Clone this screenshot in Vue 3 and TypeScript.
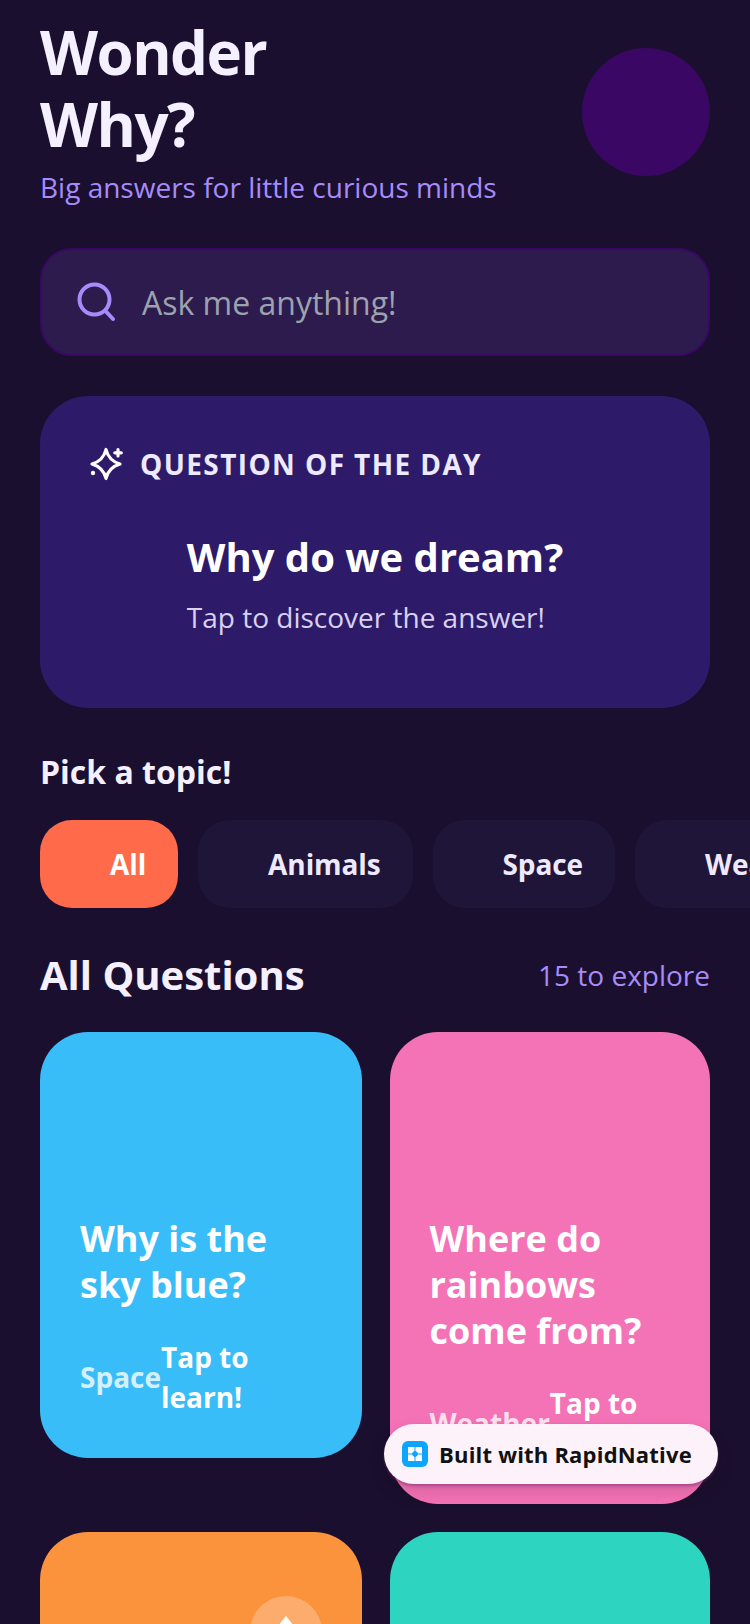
<script setup lang="ts">
interface Topic {
  label: string
  active?: boolean
}

interface Question {
  title: string
  topic: string
  color: string
  badge?: boolean
}

const topics: Topic[] = [
  { label: 'All', active: true },
  { label: 'Animals' },
  { label: 'Space' },
  { label: 'Weather' },
]

const questions: Question[] = [
  { title: 'Why is the sky blue?', topic: 'Space', color: '#38bdf8' },
  { title: 'Where do rainbows come from?', topic: 'Weather', color: '#f472b6' },
  { title: 'Why do volcanoes erupt?', topic: 'Earth', color: '#fb923c', badge: true },
  { title: 'How do fish breathe?', topic: 'Animals', color: '#2dd4bf' },
]
</script>

<template>
  <div class="screen">
    <header class="header">
      <div class="header__text">
        <h1 class="title">Wonder<br />Why?</h1>
        <p class="subtitle">Big answers for little curious minds</p>
      </div>
      <div class="avatar"></div>
    </header>

    <div class="search">
      <svg class="search__icon" viewBox="0 0 40 40" fill="none" stroke="#a78bfa" stroke-width="4" stroke-linecap="round" aria-hidden="true">
        <circle cx="18.500" cy="17.500" r="15" />
        <path d="M29.500 29l7.500 8" />
      </svg>
      <span class="search__placeholder">Ask me anything!</span>
    </div>

    <section class="daily">
      <div class="daily__label">
        <svg class="daily__icon" viewBox="0 0 36 36" fill="none" stroke="#fff" stroke-width="3.200" stroke-linejoin="round" stroke-linecap="round" aria-hidden="true">
          <path d="M18 3.500c1.800 7.500 5.500 12 14 14.500-8.500 2.500-12.200 7-14 14.500-1.800-7.500-5.500-12-14-14.500 8.500-2.500 12.200-7 14-14.500z" />
          <path d="M30 3.500v6.500M26.800 6.800h6.500" />
          <circle cx="5" cy="27" r="2.200" fill="#fff" stroke="none" />
        </svg>
        <span>QUESTION OF THE DAY</span>
      </div>
      <div class="daily__body">
        <h2 class="daily__question">Why do we dream?</h2>
        <p class="daily__hint">Tap to discover the answer!</p>
      </div>
    </section>

    <h3 class="pick">Pick a topic!</h3>
    <div class="chips">
      <div v-for="t in topics" :key="t.label" class="chip" :class="{ 'chip--active': t.active }">
        <span class="chip__emoji"></span>
        <span>{{ t.label }}</span>
      </div>
    </div>

    <div class="list-head">
      <h3 class="list-head__title">All Questions</h3>
      <span class="list-head__count">15 to explore</span>
    </div>

    <div class="grid">
      <article v-for="q in questions" :key="q.title" class="card" :style="{ backgroundColor: q.color }">
        <div v-if="q.badge" class="card__badge">
          <svg viewBox="0 0 40 40" width="40" height="40" aria-hidden="true"><path d="M20 4l16 20H4z" fill="#fff" /></svg>
        </div>
        <h4 class="card__title">{{ q.title }}</h4>
        <div class="card__foot">
          <span class="card__topic">{{ q.topic }}</span>
          <span class="card__tap">Tap to learn!</span>
        </div>
      </article>
    </div>

    <div class="built">
      <svg class="built__logo" viewBox="0 0 26 26" aria-hidden="true">
        <rect width="26" height="26" rx="6" fill="#0ea5ff" />
        <path d="M6 6h6.500v4l-1.500 1-1 1.500H6zM13.500 6H20v6.500h-4l-1-1.500-1.500-1zM6 13.500h4l1 1.500 1.500 1v4H6zM16 13.500h4V20h-6.500v-4l1.500-1z" fill="#fff" />
      </svg>
      <span>Built with RapidNative</span>
    </div>
  </div>
</template>

<style>
html,
body {
  margin: 0;
  background: #1a0f2e;
}
</style>

<style scoped>
.screen {
  position: relative;
  height: 1624px;
  overflow: hidden;
  box-sizing: border-box;
  padding: 16px 40px 0;
  background: #1a0f2e;
  font-family: "Open Sans", "Noto Sans", sans-serif;
  color: #fff;
}

.header {
  display: flex;
  justify-content: space-between;
  align-items: center;
}

.title {
  margin: 0;
  font-size: 60px;
  line-height: 72px;
  font-weight: 700;
  letter-spacing: -1.500px;
  color: #f5f0ff;
}

.subtitle {
  margin: 7px 0 0;
  font-size: 28px;
  line-height: 40px;
  color: #a78bfa;
}

.avatar {
  width: 128px;
  height: 128px;
  border-radius: 50%;
  background: #3b0764;
}

.search {
  display: flex;
  align-items: center;
  gap: 26px;
  height: 108px;
  box-sizing: border-box;
  margin-top: 41px;
  padding: 0 34px;
  border: 2px solid #3b0764;
  border-radius: 32px;
  background: #2d1b4e;
}

.search__icon {
  width: 40px;
  height: 40px;
  flex: none;
}

.search__placeholder {
  font-size: 32px;
  color: #9ca3af;
}

.daily {
  margin-top: 40px;
  height: 312px;
  box-sizing: border-box;
  padding: 50px 48px 0;
  border-radius: 48px;
  background: #2d1b69;
}

.daily__label {
  display: flex;
  align-items: center;
  gap: 16px;
  font-size: 28px;
  line-height: 36px;
  font-weight: 700;
  letter-spacing: 1.400px;
  color: #ede9fe;
}

.daily__icon {
  width: 36px;
  height: 36px;
  flex: none;
}

.daily__body {
  display: flex;
  flex-direction: column;
  align-items: flex-start;
  width: fit-content;
  margin: 47px auto 0;
}

.daily__question {
  margin: 0;
  font-size: 40px;
  line-height: 56px;
  font-weight: 700;
}

.daily__hint {
  margin: 12px 0 0;
  font-size: 28px;
  line-height: 40px;
  color: #d8d2f0;
}

.pick {
  margin: 42px 0 0;
  font-size: 32px;
  line-height: 44px;
  font-weight: 700;
  color: #f5f0ff;
}

.chips {
  display: flex;
  gap: 20px;
  margin-top: 26px;
}

.chip {
  display: flex;
  align-items: center;
  flex: none;
  height: 88px;
  padding: 0 32px;
  border-radius: 32px;
  background: #1f1539;
  font-size: 28px;
  font-weight: 700;
  letter-spacing: -0.100px;
  color: #ede9fe;
}

.chip--active {
  background: #ff6b4a;
  color: #fff;
}

.chip__emoji {
  width: 38px;
}

.list-head {
  display: flex;
  justify-content: space-between;
  align-items: center;
  margin-top: 39px;
}

.list-head__title {
  margin: 0;
  font-size: 40px;
  line-height: 56px;
  font-weight: 700;
  color: #f5f0ff;
}

.list-head__count {
  font-size: 28px;
  color: #a78bfa;
}

.grid {
  display: grid;
  grid-template-columns: 322px 320.500px;
  column-gap: 27.500px;
  row-gap: 28px;
  align-items: start;
  margin-top: 29px;
}

.card {
  position: relative;
  box-sizing: border-box;
  padding: 184px 40px 41px;
  border-radius: 48px;
}

.card__badge {
  position: absolute;
  top: 64px;
  right: 40px;
  display: flex;
  align-items: center;
  justify-content: center;
  width: 72px;
  height: 72px;
  border-radius: 50%;
  background: rgba(255, 255, 255, 0.25);
}

.card__title {
  margin: 0;
  font-size: 36px;
  line-height: 46px;
  font-weight: 700;
}

.card__foot {
  display: flex;
  align-items: center;
  margin-top: 29px;
}

.card__topic {
  font-size: 28px;
  font-weight: 700;
  color: rgba(255, 255, 255, 0.8);
}

.card__tap {
  font-size: 28px;
  line-height: 40px;
  font-weight: 700;
}

.built {
  position: absolute;
  left: 384px;
  top: 1424px;
  display: flex;
  align-items: center;
  gap: 11px;
  width: 334px;
  height: 60px;
  box-sizing: border-box;
  padding: 0 18px;
  border-radius: 30px;
  background: #fdf2f9;
  box-shadow: 0 2px 3px rgba(120, 40, 110, 0.5), 0 8px 18px rgba(0, 0, 0, 0.12);
  font-size: 22px;
  font-weight: 700;
  letter-spacing: 0.200px;
  color: #111;
}

.built__logo {
  width: 26px;
  height: 26px;
  flex: none;
}
</style>
